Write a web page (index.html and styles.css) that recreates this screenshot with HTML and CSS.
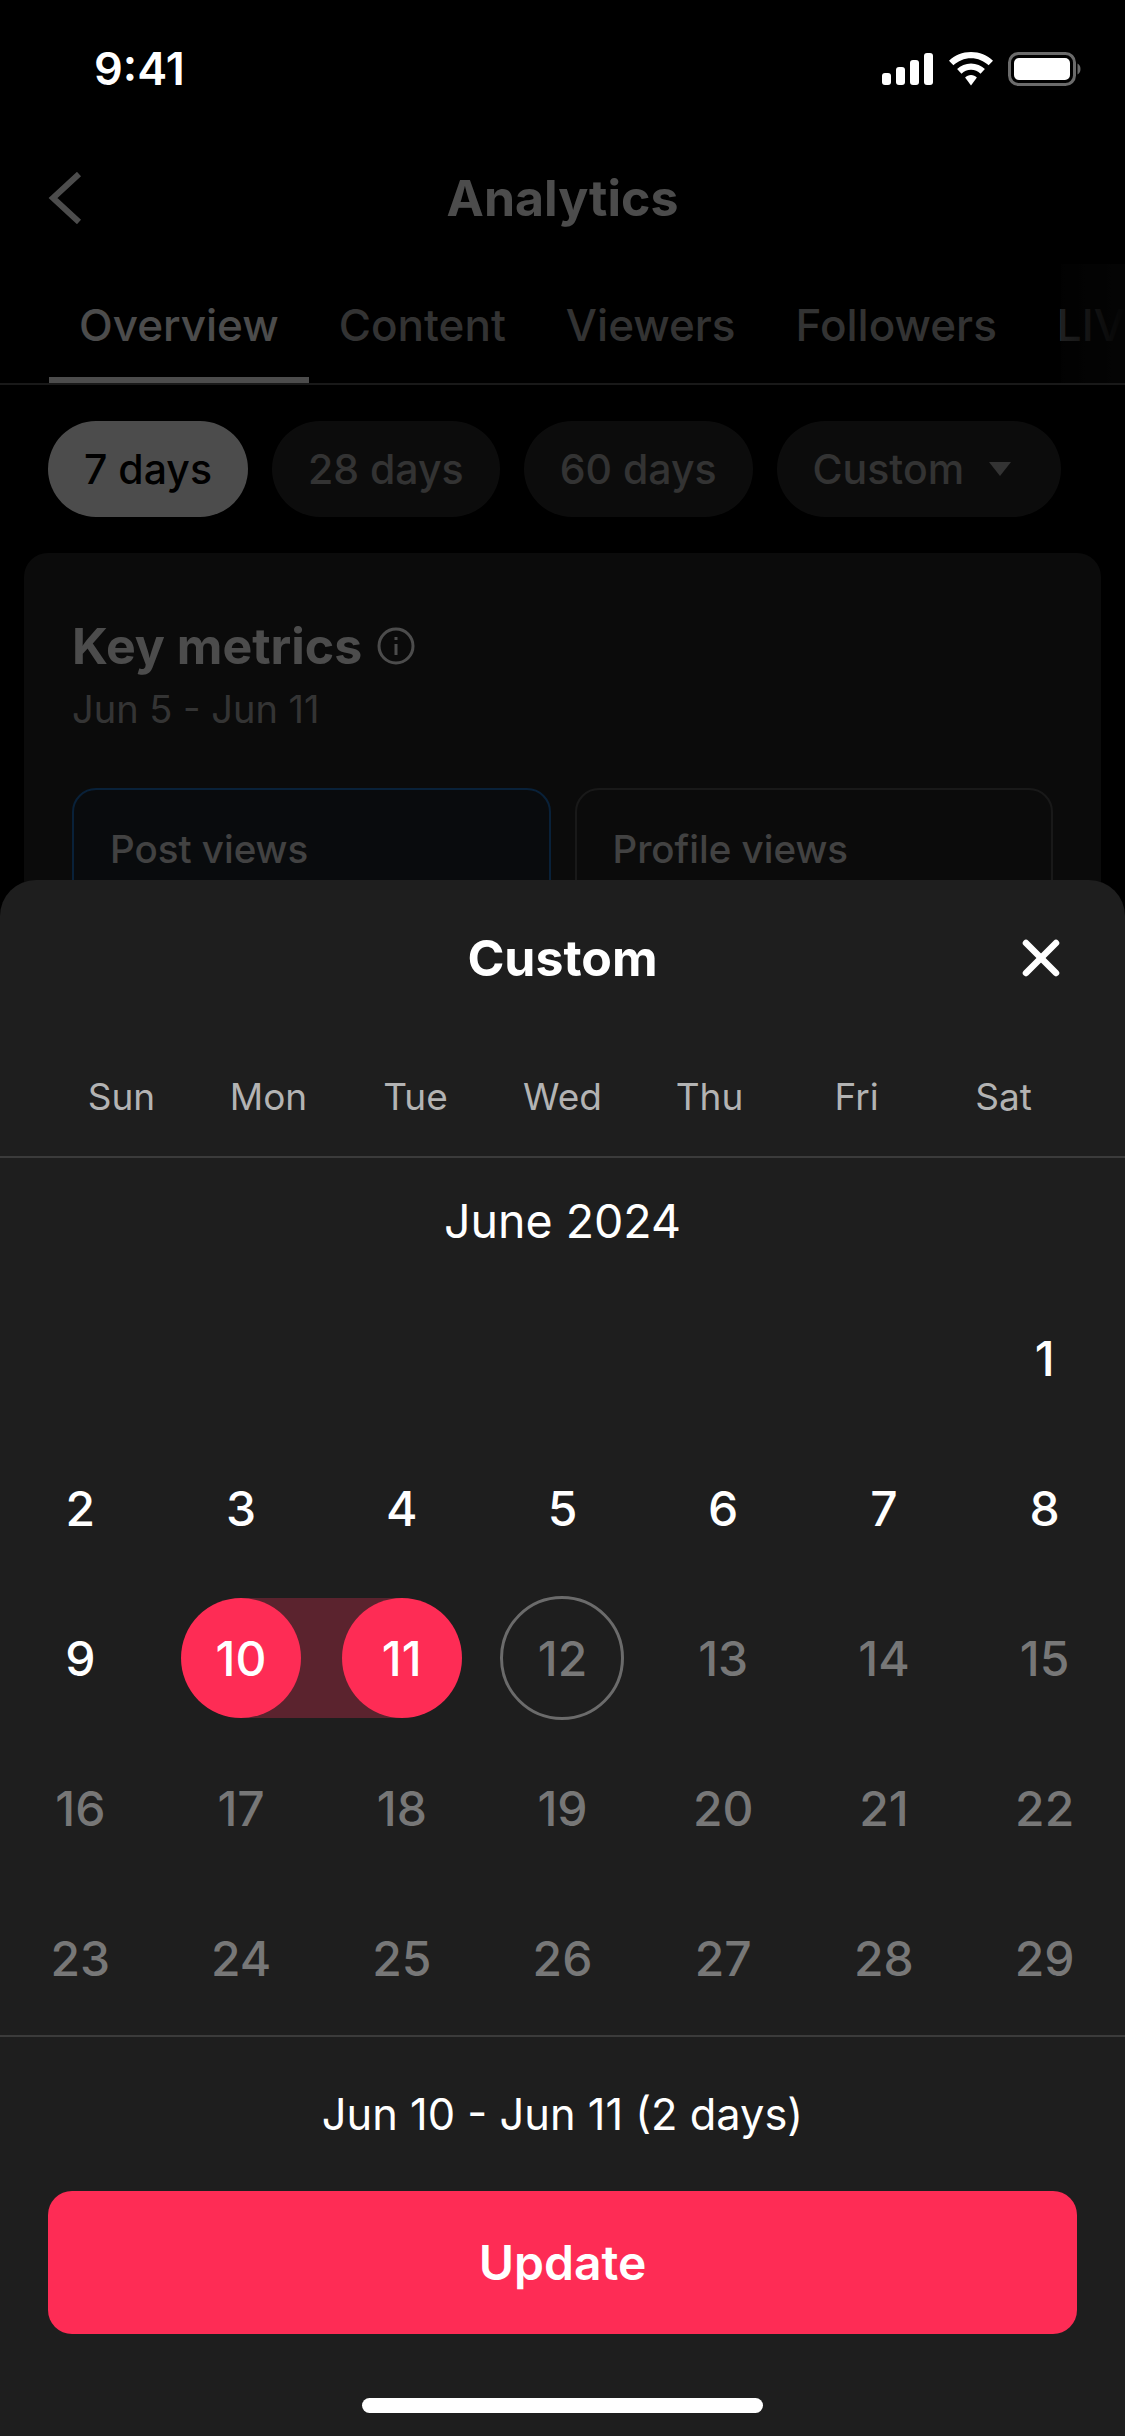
FILE: index.html
```html
<!DOCTYPE html>
<html lang="en">
<head>
    <meta charset="UTF-8">
    <meta name="viewport" content="width=device-width, initial-scale=1.0">
    <title>Analytics</title>
    <link rel="stylesheet" href="styles.css">
</head>
<body>

    <div class="telefono">
        <div class="barra-estado">
            <span class="hora">9:41</span>
            <div class="estado-iconos">
                <svg width="52" height="32" viewBox="0 0 52 32" fill="#fff">
                    <rect x="0" y="20" width="9" height="12" rx="3"/>
                    <rect x="14" y="14" width="9" height="18" rx="3"/>
                    <rect x="28" y="7" width="9" height="25" rx="3"/>
                    <rect x="42" y="0" width="9" height="32" rx="3"/>
                </svg>
                <svg width="46" height="34" viewBox="0 0 46 34" fill="#fff">
                    <path d="M23 0C14.500 0 6.700 3.300 1 8.700L5.400 13.300C10 8.900 16.200 6.200 23 6.200S36 8.900 40.600 13.300L45 8.700C39.300 3.300 31.500 0 23 0Z"/>
                    <path d="M23 11.500C17.600 11.500 12.700 13.600 9.100 17.100L13.500 21.700C16 19.300 19.300 17.800 23 17.800S30 19.300 32.500 21.700L36.900 17.100C33.300 13.600 28.400 11.500 23 11.500Z"/>
                    <path d="M23 23C20.700 23 18.600 23.900 17.100 25.400L23 33.500L28.900 25.400C27.400 23.900 25.300 23 23 23Z"/>
                </svg>
                <svg width="73" height="34" viewBox="0 0 73 34">
                    <rect x="1.500" y="1.500" width="65" height="31" rx="9" fill="none" stroke="#6b6b6b" stroke-width="3"/>
                    <rect x="6" y="6" width="56" height="22" rx="5" fill="#fff"/>
                    <path d="M69.500 11.500C71.500 12.500 72.500 14.500 72.500 17S71.500 21.500 69.500 22.500Z" fill="#6b6b6b"/>
                </svg>
            </div>
        </div>

        <div class="fondo">
            <div class="cabecera">
                <svg class="atras" width="34" height="52" viewBox="0 0 34 52" fill="none" stroke="#fff" stroke-width="6">
                    <path d="M31 2L5 26L31 50"/>
                </svg>
                <h1>Analytics</h1>
            </div>

            <div class="pestanas">
                <span class="pestana activa">Overview</span>
                <span class="pestana">Content</span>
                <span class="pestana">Viewers</span>
                <span class="pestana">Followers</span>
                <span class="pestana">LIVE</span>
                <div class="pestanas-sombra"></div>
            </div>

            <div class="chips">
                <span class="chip activo">7 days</span>
                <span class="chip">28 days</span>
                <span class="chip">60 days</span>
                <span class="chip chip-menu">Custom <i class="flecha"></i></span>
            </div>

            <div class="tarjeta">
                <div class="tarjeta-titulo">
                    <h2>Key metrics</h2>
                    <svg width="38" height="38" viewBox="0 0 38 38" fill="none" stroke="#fff" stroke-width="3">
                        <circle cx="19" cy="19" r="17"/>
                        <path d="M19 17V28"/>
                        <path d="M19 10V13"/>
                    </svg>
                </div>
                <div class="tarjeta-fecha">Jun 5 - Jun 11</div>
                <div class="metricas">
                    <div class="metrica azul">Post views</div>
                    <div class="metrica">Profile views</div>
                </div>
            </div>
        </div>

        <div class="velo"></div>

        <div class="hoja">
            <div class="hoja-cabecera">
                <h3>Custom</h3>
                <svg class="cerrar" width="40" height="40" viewBox="0 0 40 40" stroke="#fff" stroke-width="6.500" stroke-linecap="round">
                    <path d="M5 5L35 35"/>
                    <path d="M35 5L5 35"/>
                </svg>
            </div>

            <div class="semana">
                <span>Sun</span><span>Mon</span><span>Tue</span><span>Wed</span><span>Thu</span><span>Fri</span><span>Sat</span>
            </div>

            <div class="mes">June 2024</div>

            <div class="dias">
                <span></span><span></span><span></span><span></span><span></span><span></span>
                <span class="dia">1</span>
                <span class="dia">2</span>
                <span class="dia">3</span>
                <span class="dia">4</span>
                <span class="dia">5</span>
                <span class="dia">6</span>
                <span class="dia">7</span>
                <span class="dia">8</span>
                <span class="dia">9</span>
                <span class="dia inicio"><b>10</b></span>
                <span class="dia fin"><b>11</b></span>
                <span class="dia futuro hoy"><b>12</b></span>
                <span class="dia futuro">13</span>
                <span class="dia futuro">14</span>
                <span class="dia futuro">15</span>
                <span class="dia futuro">16</span>
                <span class="dia futuro">17</span>
                <span class="dia futuro">18</span>
                <span class="dia futuro">19</span>
                <span class="dia futuro">20</span>
                <span class="dia futuro">21</span>
                <span class="dia futuro">22</span>
                <span class="dia futuro">23</span>
                <span class="dia futuro">24</span>
                <span class="dia futuro">25</span>
                <span class="dia futuro">26</span>
                <span class="dia futuro">27</span>
                <span class="dia futuro">28</span>
                <span class="dia futuro">29</span>
            </div>

            <div class="resumen">Jun 10 - Jun 11 (2 days)</div>
            <button class="actualizar">Update</button>
            <div class="barra-inicio"></div>
        </div>
    </div>

</body>
</html>
```

FILE: styles.css
```css
* {
    box-sizing: border-box;
}

body {
    margin: 0;
    background-color: #000;
    font-family: Inter, "Liberation Sans", sans-serif;
    color: #fff;
}

h1, h2, h3 {
    margin: 0;
}

.telefono {
    position: relative;
    width: 1125px;
    height: 2436px;
    overflow: hidden;
}

.barra-estado {
    position: relative;
    z-index: 3;
    height: 132px;
    display: flex;
    justify-content: space-between;
    align-items: center;
    padding: 5px 44px 0 94px;
}

.hora {
    font-size: 45px;
    font-weight: 600;
}

.estado-iconos {
    display: flex;
    align-items: center;
    gap: 14px;
}

.cabecera {
    position: relative;
    height: 132px;
    display: flex;
    justify-content: center;
    align-items: center;
}

.cabecera h1 {
    font-size: 50px;
    font-weight: 700;
}

.atras {
    position: absolute;
    left: 48px;
    top: 40px;
}

.pestanas {
    position: relative;
    height: 121px;
    display: flex;
    padding: 0 0 0 49px;
    border-bottom: 2px solid #555;
    overflow: hidden;
}

.pestana {
    flex: none;
    padding: 0 30px;
    line-height: 122px;
    font-size: 44px;
    font-weight: 500;
    color: #aaa;
}

.pestana.activa {
    color: #fff;
    border-bottom: 6px solid #fff;
}

.pestanas-sombra {
    position: absolute;
    top: 0;
    right: 0;
    bottom: 0;
    width: 64px;
    background: linear-gradient(to right, rgba(16, 16, 16, 0.4), #101010);
}

.chips {
    display: flex;
    gap: 24px;
    padding: 36px 48px;
}

.chip {
    height: 96px;
    padding: 0 36px;
    border-radius: 48px;
    display: flex;
    align-items: center;
    gap: 25px;
    font-size: 41px;
    font-weight: 500;
    color: #aaa;
    background-color: #2a2a2a;
}

.chip.activo {
    color: #000;
    background-color: #fff;
}

.chip.chip-menu {
    padding-right: 50px;
}

.flecha {
    width: 0;
    height: 0;
    border-left: 11px solid transparent;
    border-right: 11px solid transparent;
    border-top: 14px solid #aaa;
}

.tarjeta {
    margin: 0 24px;
    height: 700px;
    padding: 63px 48px;
    border-radius: 24px;
    background-color: #262626;
}

.tarjeta-titulo {
    display: flex;
    align-items: center;
    gap: 15px;
}

.tarjeta-titulo h2 {
    font-size: 50px;
    font-weight: 700;
}

.tarjeta-fecha {
    margin-top: 10px;
    font-size: 38px;
    color: #b0b0b0;
}

.metricas {
    display: grid;
    grid-template-columns: 1fr 1fr;
    gap: 24px;
    margin-top: 56px;
}

.metrica {
    height: 300px;
    padding: 36px;
    border: 2px solid #555;
    border-radius: 24px;
    font-size: 38.500px;
    font-weight: 500;
    color: #ddd;
}

.metrica.azul {
    border-color: #1e6fbf;
    background-color: #1f272e;
}

.velo {
    position: absolute;
    inset: 0;
    z-index: 1;
    background-color: rgba(0, 0, 0, 0.7);
}

.hoja {
    position: absolute;
    left: 0;
    right: 0;
    bottom: 0;
    z-index: 2;
    height: 1556px;
    background-color: #1e1e1e;
    border-radius: 36px 36px 0 0;
}

.hoja-cabecera {
    position: relative;
    height: 156px;
    display: flex;
    justify-content: center;
    align-items: center;
}

.hoja-cabecera h3 {
    font-size: 50px;
    font-weight: 700;
}

.cerrar {
    position: absolute;
    right: 64px;
    top: 58px;
}

.semana {
    height: 122px;
    display: grid;
    grid-template-columns: repeat(7, 1fr);
    padding: 0 48px;
    align-items: center;
    text-align: center;
    font-size: 37px;
    color: #b3b3b3;
    border-bottom: 2px solid #3b3b3b;
}

.mes {
    height: 125px;
    line-height: 126px;
    text-align: center;
    font-size: 46.500px;
}

.dias {
    display: grid;
    grid-template-columns: repeat(7, 1fr);
    grid-auto-rows: 150px;
    border-bottom: 2px solid #3b3b3b;
    height: 754px;
}

.dia {
    position: relative;
    display: flex;
    justify-content: center;
    align-items: center;
    font-size: 48px;
    font-weight: 500;
}

.dia b {
    position: relative;
    width: 120px;
    height: 120px;
    border-radius: 50%;
    display: flex;
    justify-content: center;
    align-items: center;
    font-weight: 500;
}

.dia.inicio b,
.dia.fin b {
    background-color: #fe2c55;
}

.dia.inicio::before,
.dia.fin::before {
    content: "";
    position: absolute;
    top: 15px;
    bottom: 15px;
    background-color: #5b232e;
}

.dia.inicio::before {
    left: 50%;
    right: 0;
}

.dia.fin::before {
    left: 0;
    right: 50%;
}

.dia.futuro {
    color: #777;
}

.dia.hoy b {
    width: 124px;
    height: 124px;
    border: 3px solid #6b6b6b;
}

.resumen {
    height: 154px;
    line-height: 155px;
    text-align: center;
    font-size: 43.400px;
}

.actualizar {
    display: block;
    width: 1029px;
    height: 143px;
    margin: 0 48px;
    border: none;
    border-radius: 24px;
    background-color: #fe2c55;
    color: #fff;
    font-family: inherit;
    font-size: 48px;
    font-weight: 600;
}

.barra-inicio {
    width: 401px;
    height: 15px;
    margin: 64px auto 0;
    border-radius: 8px;
    background-color: #fff;
}
```
